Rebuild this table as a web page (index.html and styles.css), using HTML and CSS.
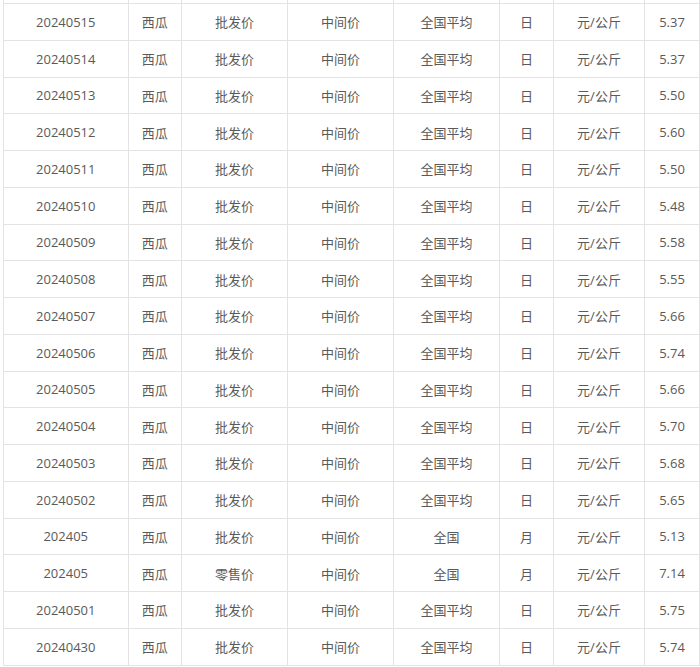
FILE: index.html
```html
<!DOCTYPE html>
<html lang="zh">
<head>
<meta charset="utf-8">
<title>西瓜价格</title>
<link rel="stylesheet" href="styles.css">
</head>
<body>
<div class="wrap">
<table class="prices">
<colgroup>
<col class="c-date"><col class="c-name"><col class="c-type"><col class="c-kind"><col class="c-area"><col class="c-freq"><col class="c-unit"><col class="c-val">
</colgroup>
<tbody>
<tr class="stub"><td></td><td></td><td></td><td></td><td></td><td></td><td></td><td></td></tr>
<tr><td>20240515</td><td>西瓜</td><td>批发价</td><td>中间价</td><td>全国平均</td><td>日</td><td>元/公斤</td><td>5.37</td></tr>
<tr><td>20240514</td><td>西瓜</td><td>批发价</td><td>中间价</td><td>全国平均</td><td>日</td><td>元/公斤</td><td>5.37</td></tr>
<tr><td>20240513</td><td>西瓜</td><td>批发价</td><td>中间价</td><td>全国平均</td><td>日</td><td>元/公斤</td><td>5.50</td></tr>
<tr><td>20240512</td><td>西瓜</td><td>批发价</td><td>中间价</td><td>全国平均</td><td>日</td><td>元/公斤</td><td>5.60</td></tr>
<tr><td>20240511</td><td>西瓜</td><td>批发价</td><td>中间价</td><td>全国平均</td><td>日</td><td>元/公斤</td><td>5.50</td></tr>
<tr><td>20240510</td><td>西瓜</td><td>批发价</td><td>中间价</td><td>全国平均</td><td>日</td><td>元/公斤</td><td>5.48</td></tr>
<tr><td>20240509</td><td>西瓜</td><td>批发价</td><td>中间价</td><td>全国平均</td><td>日</td><td>元/公斤</td><td>5.58</td></tr>
<tr><td>20240508</td><td>西瓜</td><td>批发价</td><td>中间价</td><td>全国平均</td><td>日</td><td>元/公斤</td><td>5.55</td></tr>
<tr><td>20240507</td><td>西瓜</td><td>批发价</td><td>中间价</td><td>全国平均</td><td>日</td><td>元/公斤</td><td>5.66</td></tr>
<tr><td>20240506</td><td>西瓜</td><td>批发价</td><td>中间价</td><td>全国平均</td><td>日</td><td>元/公斤</td><td>5.74</td></tr>
<tr><td>20240505</td><td>西瓜</td><td>批发价</td><td>中间价</td><td>全国平均</td><td>日</td><td>元/公斤</td><td>5.66</td></tr>
<tr><td>20240504</td><td>西瓜</td><td>批发价</td><td>中间价</td><td>全国平均</td><td>日</td><td>元/公斤</td><td>5.70</td></tr>
<tr><td>20240503</td><td>西瓜</td><td>批发价</td><td>中间价</td><td>全国平均</td><td>日</td><td>元/公斤</td><td>5.68</td></tr>
<tr><td>20240502</td><td>西瓜</td><td>批发价</td><td>中间价</td><td>全国平均</td><td>日</td><td>元/公斤</td><td>5.65</td></tr>
<tr><td>202405</td><td>西瓜</td><td>批发价</td><td>中间价</td><td>全国</td><td>月</td><td>元/公斤</td><td>5.13</td></tr>
<tr><td>202405</td><td>西瓜</td><td>零售价</td><td>中间价</td><td>全国</td><td>月</td><td>元/公斤</td><td>7.14</td></tr>
<tr><td>20240501</td><td>西瓜</td><td>批发价</td><td>中间价</td><td>全国平均</td><td>日</td><td>元/公斤</td><td>5.75</td></tr>
<tr><td>20240430</td><td>西瓜</td><td>批发价</td><td>中间价</td><td>全国平均</td><td>日</td><td>元/公斤</td><td>5.74</td></tr>
</tbody>
</table>
</div>
</body>
</html>
```
FILE: styles.css
```css
html, body {
  margin: 0;
  padding: 0;
  background: #ffffff;
}
body {
  overflow: hidden;
  font-family: "Open Sans", "Noto Sans CJK SC", sans-serif;
  font-size: 13px;
  color: #5a5a5a;
}
.wrap {
  padding-left: 3px;
  margin-top: -33.75px;
}
.prices {
  border-collapse: collapse;
  table-layout: fixed;
  width: 697px;
}
.prices tr {
  height: 36.75px;
}
.prices td {
  border: 1px solid #e3e3e3;
  text-align: center;
  vertical-align: middle;
  padding: 0;
  white-space: nowrap;
  overflow: hidden;
}
.c-date { width: 124.5px; }
.c-name { width: 53.5px; }
.c-type { width: 106px; }
.c-kind { width: 106px; }
.c-area { width: 106px; }
.c-freq { width: 54px; }
.c-unit { width: 91px; }
.c-val  { width: 55px; }
```
